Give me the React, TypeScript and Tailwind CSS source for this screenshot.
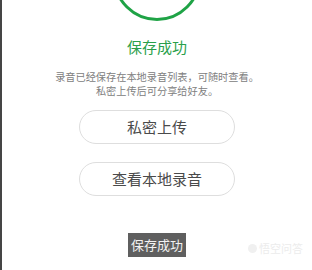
import React from "react";

export default function App() {
  const font = { fontFamily: '"Noto Sans CJK SC", "Noto Sans", sans-serif' };
  return (
    <div className="relative w-[312px] h-[270px] bg-white overflow-hidden border-l-2 border-[#454545]" style={font}>
      <div className="flex flex-col items-center w-[310px]">
        <div className="h-[21px] overflow-hidden flex items-end justify-center">
          <div className="w-[88px] h-[88px] shrink-0 rounded-full border-[3px] border-[#1fa346]" />
        </div>
        <div className="mt-[16px] text-[15px] leading-[20px] text-[#2a9f4b]">保存成功</div>
        <div className="mt-[13px] text-[10.2px] leading-[14px] text-[#808080] text-center">
          <div>录音已经保存在本地录音列表，可随时查看。</div>
          <div>私密上传后可分享给好友。</div>
        </div>
        <div className="mt-[12px] w-[156px] h-[34px] rounded-full border border-[#dedede] flex items-center justify-center text-[15px] text-[#4a4a4a]">
          私密上传
        </div>
        <div className="mt-[18px] w-[156px] h-[34px] rounded-full border border-[#dedede] flex items-center justify-center text-[15px] text-[#4a4a4a]">
          查看本地录音
        </div>
        <div className="mt-[37px] h-[24px] px-[3px] bg-[#5f5f5f] flex items-center text-[13px] text-[#f2f2f2]">
          保存成功
        </div>
      </div>
      <div className="absolute left-[246px] top-[241px] flex items-center gap-[2px] text-[11px] leading-[14px] text-[#ececec]">
        <span className="inline-block w-[9px] h-[9px] rounded-full bg-[#f0f0f0]" />
        <span>悟空问答</span>
      </div>
    </div>
  );
}
